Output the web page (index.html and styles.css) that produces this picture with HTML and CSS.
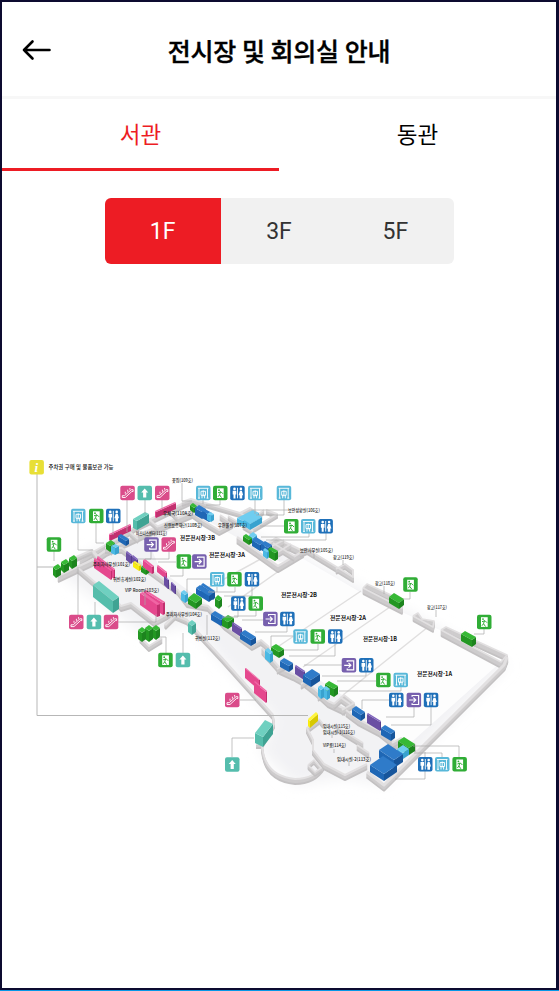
FILE: index.html
```html
<!DOCTYPE html>
<html lang="ko">
<head>
<meta charset="utf-8">
<title>전시장 및 회의실 안내</title>
<link rel="stylesheet" href="styles.css">
</head>
<body>
<div class="screen">
  <header class="header">
    <button class="back" aria-label="뒤로"><svg width="30" height="22" viewBox="0 0 30 22"><path d="M27.500 11H2M10.500 2.500 2 11l8.500 8.500"/></svg></button>
    <h1 class="title">전시장 및 회의실 안내</h1>
  </header>
  <nav class="tabs"><a class="tab active">서관</a><a class="tab">동관</a></nav>
  <div class="floors"><button class="floor selected">1F</button><button class="floor">3F</button><button class="floor">5F</button></div>
  <main class="map">
    <svg width="554" height="360" viewBox="2 450 554 360">
      <defs>
        <filter id="soft" x="-20%" y="-20%" width="140%" height="140%"><feGaussianBlur stdDeviation="7"/></filter>
        <g id="i-wc"><rect class="blue" width="14.5" height="14.5" rx="2"/><path class="ink" d="M2.500 5h3.600v3.700h-.8v4h-2v-4h-.8zM9.700 5h2l1.300 4.400h-1v3.300H9.400V9.400h-1z"/><circle class="ink" cx="4.3" cy="3.1" r="1.3"/><circle class="ink" cx="10.7" cy="3.1" r="1.3"/><path class="line" d="M7.300 2v10.500"/></g>
        <g id="i-lift"><rect class="cyan" width="14.5" height="14.5" rx="2"/><path class="line" d="M2 2.500h10.500M3 2.500v10M11.500 2.500v10M5 5.500h4.500v4H5zM7.200 4.500v6M6 9v3.500M8.600 9v3.500M2 12.300h2M10.500 12.300h2"/></g>
        <g id="i-stair"><rect class="green" width="14.5" height="14.5" rx="2"/><path class="ink" d="M4 2.500h6.700v9.700H4z"/><circle class="green" cx="6" cy="4.4" r=".9"/><path class="mark" d="m5 7 3-1 2 2M7.500 6l-1 3 2 2.800M6.500 9 5 11"/></g>
        <g id="i-esc"><rect class="pink" width="14.5" height="14.5" rx="2"/><path class="line" d="M2 11.800h3l6.500-6h1.300V4H11l-6.800 6H2zM5 8V6M7.400 6V4M9.600 4V2.300"/></g>
        <g id="i-up"><rect class="teal" width="14.5" height="14.5" rx="2"/><path class="ink" d="m7.200 2.800 3.500 4H8.800v5H5.600v-5H3.700z"/></g>
        <g id="i-exit"><rect class="purple" width="14.5" height="14.5" rx="2"/><path class="line bold" d="M5.500 4V2.800H12v9H5.500v-1.300M2.500 7.300H9M6.800 4.900 9.200 7.300 6.800 9.700"/></g>
      </defs>
      <g filter="url(#soft)" class="shade">
        <path d="M55 570 190 505 300 555 508 665 385 785 345 777 295 785 260 750 275 720 190 625 145 635z"/>
      </g>
      <path class="floorplate" d="M194 513 280 562 300 557 360 592 503 660 405 748 350 700 250 635 160 570 150 545z"/>
      <path class="divide" d="M268 555 204 590M286 566 228 607M361 591 276 648M390 607 303 667M433 623 343 695"/>
      <g id="walls"></g>
      <g id="rooms"></g>
      <g class="leaders">
        <path class="thick" d="M37 474V715.500H308M37 567H53"/>
        <path d="M54 551v10M78 523v27h15M96 523v20h8M113 523v12M127 500v32M145 500v14M162 500v9M182 483v18h10M203 500v4M220 500v5h-14M255 500v14M284 500v15h-28M288 510h-37M291 526H260M309 533v4h-48M326 533v7h-60M151 551v8h-13M169 551v8h-24M183 568v8h-13M176 562h-18M78 567v48M95 602v13M118 622h38v-8M166 653v-16h-7M183 653v-20M217 587v5M217 579h-30v14M235 587v5h-27M252 587v9h-28M238 610v7h-16M256 610v6h-22M270 620h-28M287 626v6h-32M293 636h-22v12M318 644v6h-34M335 644v12h-46M342 665h-38M366 672v4h-44M383 681h-46M401 687v4h-62M390 700h-28v9M414 707v10h-28M431 707v18h-40M425 757v-5M442 757v-4h-28M459 757v-11h-46M425 771v8h-30M410 592v7h-7M484 629v5h-10M240 700h16M232 757v-19h22M343 560v5M384 586v8M436 610v7M314 554v4M207 635v-20M145 593v12M332 734v4M334 749v4M349 762v4"/>
      </g>
      <g class="labels">
        <text x="172" y="481.500" textLength="21" lengthAdjust="spacingAndGlyphs">꽃집(109호)</text>
        <text x="163" y="515" textLength="30" lengthAdjust="spacingAndGlyphs">우체국(110A호)</text>
        <text x="164" y="527" textLength="38" lengthAdjust="spacingAndGlyphs">신용보증재단(110B호)</text>
        <text x="136" y="535" textLength="31" lengthAdjust="spacingAndGlyphs">비즈니스센터(111호)</text>
        <text x="218" y="527" textLength="29" lengthAdjust="spacingAndGlyphs">우편물실(107호)</text>
        <text x="288" y="512" textLength="32" lengthAdjust="spacingAndGlyphs">보안상황실(106호)</text>
        <text x="300" y="552" textLength="33" lengthAdjust="spacingAndGlyphs">보안사무실(105호)</text>
        <text x="333" y="559" textLength="21" lengthAdjust="spacingAndGlyphs">창고(119호)</text>
        <text x="375" y="584.500" textLength="20" lengthAdjust="spacingAndGlyphs">창고(118호)</text>
        <text x="427" y="609" textLength="20" lengthAdjust="spacingAndGlyphs">창고(117호)</text>
        <text x="93" y="566" textLength="37" lengthAdjust="spacingAndGlyphs">주최자사무실(101호)</text>
        <text x="113" y="581" textLength="33" lengthAdjust="spacingAndGlyphs">귀빈휴게실(102호)</text>
        <text x="125" y="592" textLength="34" lengthAdjust="spacingAndGlyphs">VIP Room(103호)</text>
        <text x="166" y="616" textLength="36" lengthAdjust="spacingAndGlyphs">주최자사무실(104호)</text>
        <text x="195" y="640" textLength="25" lengthAdjust="spacingAndGlyphs">귀빈실(112호)</text>
        <text x="323" y="728.300" textLength="27" lengthAdjust="spacingAndGlyphs">임대시설(115호)</text>
        <text x="323" y="733.700" textLength="32" lengthAdjust="spacingAndGlyphs">임대시설-1(116호)</text>
        <text x="323" y="747" textLength="23" lengthAdjust="spacingAndGlyphs">VIP룸(114호)</text>
        <text x="337" y="761" textLength="34" lengthAdjust="spacingAndGlyphs">임대시설-2(113호)</text>
      </g>
      <g class="halls">
        <text x="180" y="539.500" textLength="35" lengthAdjust="spacingAndGlyphs">전문전시장-3B</text>
        <text x="209" y="556.500" textLength="36" lengthAdjust="spacingAndGlyphs">전문전시장-3A</text>
        <text x="281" y="596.500" textLength="36" lengthAdjust="spacingAndGlyphs">전문전시장-2B</text>
        <text x="330" y="620" textLength="36" lengthAdjust="spacingAndGlyphs">전문전시장-2A</text>
        <text x="363" y="640.500" textLength="34" lengthAdjust="spacingAndGlyphs">전문전시장-1B</text>
        <text x="417" y="676" textLength="35" lengthAdjust="spacingAndGlyphs">전문전시장-1A</text>
        <text class="notice" x="48.500" y="469.300" textLength="65" lengthAdjust="spacingAndGlyphs">주차권 구매 및 물품보관 가능</text>
      </g>
      <rect class="info" x="29.400" y="460" width="14.500" height="14.500" rx="2"/>
      <text class="info-i" x="34.400" y="471.700">i</text>
      <g id="icons"></g>
    </svg>
  </main>
</div>
<script src="map.js"></script>
</body>
</html>
```
FILE: styles.css
```css
* { box-sizing: border-box; }
html, body { margin: 0; height: 100%; }
body { background: #0d0b30; border-bottom: 1px solid #0797e6; padding: 2px 3px 2px 2px; font-family: Roboto, "Noto Sans CJK KR", sans-serif; }
.screen { height: 100%; background: #fff; display: flex; flex-direction: column; overflow: hidden; }
.header { height: 97px; flex: none; border-bottom: 3px solid #f7f7f7; display: grid; grid-template-columns: 70px 1fr 70px; align-items: center; }
button { border: 0; background: none; padding: 0; font: inherit; }
.back { padding: 1px 0 0 20px; display: flex; }
.back path { fill: none; stroke: #000; stroke-width: 2.6; stroke-linecap: round; stroke-linejoin: round; }
.title { margin: 7px 0 0; text-align: center; font-size: 25px; line-height: 36px; font-weight: 500; white-space: nowrap; letter-spacing: -.25px; -webkit-text-stroke: .4px #000; }
.tabs { height: 72px; flex: none; display: grid; grid-template-columns: 1fr 1fr; }
.tab { text-align: center; font-size: 22.5px; line-height: 72px; color: #000; }
.tab.active { color: #ed1c24; border-bottom: 3px solid #ed1c24; }
.tab.active, .tab { height: 72px; }
.floors { width: 349px; height: 66px; flex: none; margin: 27px 0 0 102.5px; display: grid; grid-template-columns: repeat(3, 1fr); background: #f1f1f1; border-radius: 6px; overflow: hidden; }
.floor { color: #333; font-size: 23px; padding-top: 1px; }
.floor.selected { background: #ed1c24; color: #fff; }
.map { margin-top: 186px; height: 360px; }
.map svg { display: block; }
.blue { fill: #1f70b9; } .cyan { fill: #58b8d9; } .green { fill: #30ad36; } .pink { fill: #da4c8a; } .teal { fill: #55bdad; } .purple { fill: #7760ae; }
.ink { fill: #fff; }
.line { fill: none; stroke: #fff; stroke-width: .9; }
.line.bold { stroke-width: 1.2; }
.mark { fill: none; stroke: #30ad36; stroke-width: 1; }
.shade { fill: #f2f2f4; }
.floorplate { fill: #fff; opacity: .8; }
.divide { fill: none; stroke: #e0dfdf; stroke-width: 1.5; }
.wall { fill: none; stroke-linejoin: round; }
.leaders { fill: none; stroke: #aaa; stroke-width: .7; }
.leaders .thick { stroke: #b7b7b7; stroke-width: 1; }
.labels, .halls { font-family: "Noto Sans CJK KR", sans-serif; fill: #222; }
.labels { font-size: 4.6px; font-weight: 500; }
.halls { font-size: 5.8px; font-weight: 700; fill: #111; }
.halls .notice { font-size: 5.6px; font-weight: 500; }
.info { fill: #e8df36; }
.info-i { font: italic bold 13px "Liberation Serif", serif; fill: #fff; }
```
FILE: map.js
```js
const NS = 'http://www.w3.org/2000/svg';
function add(parent, tag, attrs) {
  const el = document.createElementNS(NS, tag);
  for (const key in attrs) el.setAttribute(key, attrs[key]);
  document.getElementById(parent).appendChild(el);
}

// Each wall: points along its top edge, height, thickness.
const walls = [
  ['80,560 93,552 118,538 136,526 190,500', 5, 2],
  ['74,558 92,550 99,557', 4, 2],
  ['58,576 77,567 92,560 106,550 145,532 192,512', 6, 2.2],
  ['93,552 98,558M105,544 112,551M130,532 138,539M150,520 158,527M170,510 177,517', 4, 2],
  ['77,567 117,601 121,606 131,603 154,621 173,611', 5, 2],
  ['182,502 191,499 240,513 250,508 262,516', 4, 2],
  ['190,511 204,521 219,530 232,523 220,515', 5, 2],
  ['228,516 238,522 251,515M240,513 251,519 264,510', 4, 1.6],
  ['252,529 277,514 266,510M243,525 253,531', 4, 2],
  ['237,537 278,566 303,551 276,538 266,545', 6, 2.2],
  ['273,543 294,556M268,548 284,540M278,552 291,544', 5, 1.6],
  ['300,552 307,549 340,569 353,577 353,570 345,564 336,569', 5, 2],
  ['363,588 367,584 402,600 402,608 363,588', 6, 1.6],
  ['413,616 418,613 422,619 434,621 433,627 413,616', 5, 1.6],
  ['441,630 446,627 507,655 501,662 441,630', 6, 1.6],
  ['507,657 504,665 384,785 367,772', 5, 3],
  ['105,548 122,548 145,566 178,590 187,602 208,606 225,625 252,645 261,640 269,647', 5, 2],
  ['262,648 280,668 293,674 302,679 316,690 328,701 345,709', 6, 2],
  ['277,669 286,664M301,684 318,673M318,696 334,685M334,704 344,695 354,703 342,710M340,697 350,704', 5, 1.8],
  ['346,710 358,719 379,730 394,742 416,745', 6, 2],
  ['165,625 175,615 187,620 197,631 222,658 273,715', 4, 2.5],
  ['273,716 274,724 262,744 256,744', 4, 2],
  ['262,745 Q264,776 295,779 Q315,779 324,764', 5, 2],
  ['319,719 307,728 313,740 313,750 324,764 345,775 367,764', 5, 2],
  ['319,719 323,724M308,765 314,760 321,768 315,772 308,765', 4, 1.6],
  ['337,727 363,743M357,745 369,753', 5, 2],
  ['140,637 149,646 162,638', 5, 2],
  ['392,743 401,738 406,742', 5, 2]
];
for (const [points, height, width] of walls) {
  const d = 'M' + points;
  for (let k = height; k > 0; k--) {
    add('walls', 'path', { class: 'wall', d, transform: `translate(0 ${k})`, stroke: k > height - 2 ? '#c3c1c2' : '#cecccd', 'stroke-width': width });
  }
  add('walls', 'path', { class: 'wall', d, stroke: '#e2e0e1', 'stroke-width': width });
}

// Top, left face and right face of each colour.
const tones = {
  g: ['#37b936', '#239722', '#1d841e'], b: ['#2f7bc9', '#1f67b5', '#17559b'], c: ['#6fcdf0', '#4bb9e4', '#38a2cf'],
  p: ['#f065a4', '#e5488e', '#c2306f'], t: ['#6fd0c0', '#55bdab', '#3fa393'], v: ['#8064bd', '#6a4fa3', '#573e8d'], y: ['#fff53c', '#f8eb10', '#d8c900']
};
// colour, left corner of the roof, vector along the front, vector to the back, height
const rooms = [
  ['g',69,558,3,3,5,-3,8],['g',61,562,3,3,5,-3,8],['g',53,567,3,3,5,-3,8],
  ['p',109,534,1,1,21,-10,6],['t',133,519,4,2,12,-7,9],['p',155,511,1,1,20,-9,6],
  ['b',118,536,8,5,3,-2,5],['g',106,543,4,3,5,-3,6],['c',111,546,4,2,4,-2,7],
  ['v',126,552,5,4,1,-1,8],['v',132,556,5,4,1,-1,6],['y',133,562,6,4,2,-1,5],['g',141,567,5,3,4,-3,5],
  ['p',143,560,9,7,2,-1,7],['p',157,566,9,7,1,-1,6],['p',97,557,17,13,1,-1,9],['p',94,559,17,12,1,-1,9],
  ['t',93,585,20,16,6,-4,12],['p',144,591,19,12,2,-1,12],['p',140,593,17,12,3,-1,12],
  ['v',164,576,4,4,1,0,9],['v',171,582,4,4,1,0,8],['c',181,592,4,3,3,-2,8],
  ['b',201,585,12,8,2,-2,7],['b',196,588,13,8,4,-3,6],['g',188,598,8,5,6,-5,6],['g',215,598,4,3,3,-3,8],
  ['b',211,614,10,6,4,-3,6],['g',222,619,6,3,6,-4,7],['v',232,623,9,6,1,-1,8],['b',240,633,11,7,5,-3,6],
  ['t',188,623,4,3,4,-3,9],['g',271,647,8,5,5,-3,6],['c',265,650,5,4,3,-2,9],['b',280,661,9,5,4,-3,6],
  ['v',295,666,9,6,1,-1,8],['b',303,675,8,5,9,-6,7],['g',325,684,9,5,4,-3,8],['c',323,688,4,3,3,-2,9],['c',318,687,3,3,3,-2,9],
  ['b',352,709,9,6,4,-3,6],['v',367,714,13,8,1,-1,9],['b',381,728,10,6,4,-3,7],
  ['g',398,741,11,7,6,-4,7],['c',397,749,6,4,6,-4,6],['b',379,750,15,10,9,-6,8],['b',370,765,14,9,13,-9,7],
  ['g',190,505,4,3,3,-2,5],['b',195,508,7,4,4,-3,7],['b',202,511,7,4,3,-2,7],['c',207,514,4,2,3,-2,6],
  ['c',237,518,6,3,16,-8,6],['c',244,520,6,4,12,-7,6],['c',249,535,4,3,4,-3,5],['g',243,536,6,4,3,-2,5],
  ['b',252,540,8,5,4,-3,6],['b',261,544,7,4,4,-3,6],['g',268,549,7,4,3,-2,8],['c',263,550,4,3,2,-2,6],
  ['g',389,597,10,6,5,-4,6],['g',461,634,11,6,4,-3,7],
  ['p',245,668,14,12,1,0,10],['p',254,682,12,10,1,-1,11],['t',255,733,8,4,10,-13,10],['y',308,719,2,2,8,-7,7],
  ['g',152,628,4,3,4,-3,9],['g',145,628,4,3,4,-3,11],['g',138,630,4,3,4,-3,9]
];
for (const [tone, x, y, dx, dy, ex, ey, h] of rooms) {
  const [top, left, right] = tones[tone];
  add('rooms', 'path', { fill: left, d: `M${x} ${y}l${dx} ${dy}v${h}l${-dx} ${-dy}z` });
  add('rooms', 'path', { fill: right, d: `M${x + dx} ${y + dy}l${ex} ${ey}v${h}l${-ex} ${-ey}z` });
  add('rooms', 'path', { fill: top, d: `M${x} ${y}l${dx} ${dy}l${ex} ${ey}l${-dx} ${-dy}z` });
}

const icons = {
  esc: [[120.3,485.7],[155,485.7],[161.5,537.3],[69,614.8],[103.8,614.8],[225,692.7]],
  up: [[137.5,485.7],[86.7,614.8],[175.7,652.8],[225,757.3]],
  lift: [[71,508.8],[196,485.8],[248,485.8],[276.7,485.8],[301,519],[210,572],[293.3,629.3],[393.5,672.7],[435,757]],
  stair: [[89,508.8],[46.7,537.3],[213,485.8],[284,519],[176.6,554.3],[227.2,572],[248.5,596.3],[310.5,629.3],[158.2,652.8],[403.2,577.3],[477,614.7],[376.1,672.7],[452.4,757]],
  wc: [[106,508.8],[230.2,485.8],[318.4,519],[244.7,572],[231.1,596.3],[280.1,611.7],[328,629.3],[359,658],[389,692.7],[423.8,692.7],[418,757]],
  exit: [[144.2,537.3],[192.1,554.3],[263.1,611.7],[341.7,658],[406.6,692.7]]
};
for (const kind in icons) {
  for (const [x, y] of icons[kind]) add('icons', 'use', { href: '#i-' + kind, x, y });
}
```
